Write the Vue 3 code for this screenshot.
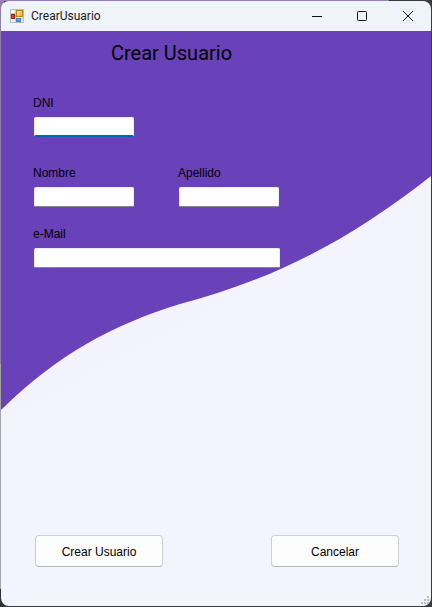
<script setup>
import { ref } from 'vue'

const dni = ref('')
const nombre = ref('')
const apellido = ref('')
const email = ref('')
</script>

<template>
  <div class="desktop">
    <div class="window">
      <header class="titlebar">
        <svg class="app-icon" width="14" height="14" viewBox="0 0 14 14" aria-hidden="true">
          <defs>
            <linearGradient id="gold" x1="0" y1="0" x2="1" y2="1">
              <stop offset="0" stop-color="#fff0a0" />
              <stop offset="1" stop-color="#f0a800" />
            </linearGradient>
            <linearGradient id="sky" x1="0" y1="0" x2="0" y2="1">
              <stop offset="0" stop-color="#9cc8ff" />
              <stop offset="1" stop-color="#2f74dc" />
            </linearGradient>
          </defs>
          <rect x="0.5" y="0.5" width="13" height="13" fill="#f4f4f4" stroke="#b9bbbd" />
          <path d="M5.500 1V13M1 9.500H13M1 4.500H5" stroke="#c6c8ca" fill="none" />
          <rect x="6.500" y="1.500" width="6" height="6" fill="url(#gold)" stroke="#b98312" />
          <rect x="1.500" y="5.500" width="3" height="4" fill="#d8452c" stroke="#a01d12" />
          <rect x="6.500" y="9.500" width="4" height="3" fill="url(#sky)" stroke="#3f7ed8" />
        </svg>
        <span class="caption">CrearUsuario</span>
        <button class="win-btn" type="button" aria-label="Minimizar">
          <svg width="12" height="12" viewBox="0 0 12 12"><path d="M2 6.500H12" /></svg>
        </button>
        <button class="win-btn" type="button" aria-label="Maximizar">
          <svg width="12" height="12" viewBox="0 0 12 12"><rect x="1.500" y="1.500" width="9" height="9" rx="1" /></svg>
        </button>
        <button class="win-btn" type="button" aria-label="Cerrar">
          <svg width="12" height="12" viewBox="0 0 12 12"><path d="M1 1L11 11M11 1L1 11" /></svg>
        </button>
      </header>

      <form class="client" @submit.prevent>
        <svg class="wave" viewBox="1 31 430 575" preserveAspectRatio="none" aria-hidden="true">
          <defs>
            <linearGradient id="paper" x1="0" y1="0" x2="0.4" y2="1">
              <stop offset="0.3" stop-color="#f1f0fe" />
              <stop offset="0.6" stop-color="#f4f4ff" />
            </linearGradient>
          </defs>
          <rect x="1" y="31" width="430" height="575" fill="url(#paper)" />
          <path d="M1 31H431V176C350 240 275 279 180 304C112 325 57 355 1 410Z" fill="#6941b9" />
        </svg>

        <h1>Crear Usuario</h1>

        <div class="fields">
          <div class="field dni">
            <label for="dni">DNI</label>
            <input id="dni" v-model="dni" class="active" type="text" />
          </div>
          <div class="field">
            <label for="nombre">Nombre</label>
            <input id="nombre" v-model="nombre" type="text" />
          </div>
          <div class="field">
            <label for="apellido">Apellido</label>
            <input id="apellido" v-model="apellido" type="text" />
          </div>
          <div class="field wide">
            <label for="email">e-Mail</label>
            <input id="email" v-model="email" type="email" />
          </div>
        </div>

        <div class="actions">
          <button type="submit">Crear Usuario</button>
          <button type="button">Cancelar</button>
        </div>

        <svg class="grip" width="8" height="8" viewBox="0 0 8 8" aria-hidden="true">
          <path d="M6 0h2v2h-2zM3 3h2v2h-2zM6 3h2v2h-2zM0 6h2v2h-2zM3 6h2v2h-2zM6 6h2v2h-2z" fill="#bdbdc4" />
        </svg>
      </form>
    </div>
  </div>
</template>

<style>
body {
  background: #2f2f33;
}
</style>

<style scoped>
.desktop {
  box-sizing: border-box;
  display: flex;
  min-height: 100vh;
  padding: 1px;
  background:
    linear-gradient(#9a7fc4, #9a7fc4) top left / 90% 1px no-repeat,
    linear-gradient(#8f7fb0 0 60%, #a3a3a8 60% 97%, #2f2f33 97%) top left / 4px 100% no-repeat,
    #3a3a40;
}

.window {
  display: flex;
  flex: 1;
  flex-direction: column;
  overflow: hidden;
  border-radius: 8px;
}

.titlebar {
  display: flex;
  align-items: center;
  height: 30px;
  padding-left: 9px;
  background: #eff4fb;
}

.caption {
  flex: 1;
  margin-left: 7px;
  color: #1a1a1a;
  font: 12px/16px Roboto, "Liberation Sans", sans-serif;
}

.win-btn {
  display: flex;
  align-items: center;
  justify-content: center;
  width: 46px;
  height: 30px;
  padding: 0;
  border: 0;
  background: transparent;
}

.win-btn svg {
  fill: none;
  stroke: #111;
}

.client {
  position: relative;
  display: flex;
  flex: 1;
  flex-direction: column;
  color: #000;
  font: 12px/16px "Liberation Sans", Arial, sans-serif;
}

.wave {
  position: absolute;
  inset: 0;
  z-index: -1;
  width: 100%;
  height: 100%;
}

.client,
.window {
  isolation: isolate;
}

h1 {
  margin: 10px 0 0 110px;
  font-family: Roboto, "Liberation Sans", sans-serif;
  font-size: 20px;
  font-weight: 400;
  line-height: 24px;
}

.fields {
  display: grid;
  grid-template-columns: 100px 100px;
  column-gap: 45px;
  row-gap: 24px;
  margin: 30px 0 0 33px;
}

.field {
  display: flex;
  flex-direction: column;
  gap: 6px;
}

.field label {
  align-self: flex-start;
  margin-left: -1px;
}

.field input {
  box-sizing: border-box;
  width: 100%;
  height: 20px;
  padding: 0 4px;
  border: 1px solid #ececf0;
  border-bottom-color: #86868b;
  border-radius: 2px;
  background: #fff;
  font: inherit;
  outline: none;
}

.field input.active {
  border-bottom: 2px solid #0067c0;
}

.dni {
  grid-column: 1 / -1;
  width: 100px;
  margin-bottom: 4px;
}

.wide {
  grid-column: 1 / -1;
  width: 246px;
  margin-top: -5px;
}

.actions {
  display: flex;
  justify-content: space-between;
  margin: auto 32px 39px 34px;
}

.actions button {
  width: 128px;
  height: 32px;
  padding: 1px 0 0;
  border: 1px solid #d0d0d3;
  border-bottom-color: #b8b8bb;
  border-radius: 4px;
  background: #fdfdfd;
  color: #000;
  font: inherit;
}

.grip {
  position: absolute;
  right: 2px;
  bottom: 2px;
}
</style>
